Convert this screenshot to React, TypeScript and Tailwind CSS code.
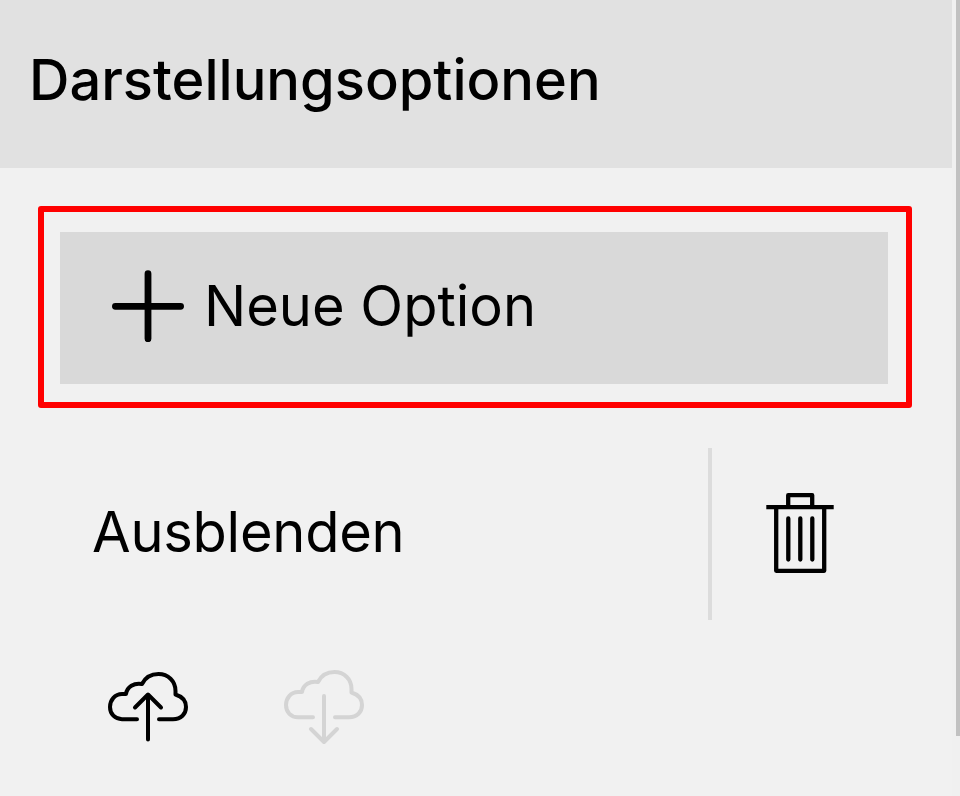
function PlusIcon() {
  return (
    <svg className="h-[72px] w-[72px] shrink-0" viewBox="0 0 72 72" fill="none" stroke="#000" strokeWidth="6.800" strokeLinecap="round" aria-hidden="true">
      <path d="M36 3.700V68.800M3.400 36.300H68.600" />
    </svg>
  );
}

function TrashIcon() {
  return (
    <svg className="h-[84px] w-[68px]" viewBox="0 0 68 84" fill="none" stroke="#000" strokeWidth="4.300" aria-hidden="true">
      <path d="M0.300 15.200H67.700" />
      <path d="M22.200 15V3.200H46.200V15M10.200 15V78.800H58.200V15" strokeLinejoin="round" />
      <path d="M22.300 26.500V67.500M34.300 26.500V67.500M46.300 26.500V67.500" strokeLinecap="round" />
    </svg>
  );
}

function UploadIcon() {
  return (
    <svg className="h-[80px] w-[80px]" viewBox="0 0 80 80" fill="none" stroke="#000" strokeWidth="4" strokeLinecap="round" strokeLinejoin="round" aria-hidden="true">
      <path d="M29 53.200H14C7 53.200 2 48 2 41C2 34 7 28 14 28H18C19 21 26 16.500 34 18C37 12 43 8 50.500 8C60 8 67.500 15 67.500 25V28.500C74 30.500 78 35 78 41C78 48 73 53.200 65 53.200H51" />
      <path d="M40 73.500V29M27 41.500L40 28.500L53 41.500" />
    </svg>
  );
}

function DownloadIcon() {
  return (
    <svg className="h-[80px] w-[80px]" viewBox="0 0 80 80" fill="none" stroke="#d4d4d4" strokeWidth="4" strokeLinecap="round" strokeLinejoin="round" aria-hidden="true">
      <path d="M29 51.300H14C7 51.300 2 46 2 39C2 32 7 26 14 26H18C19 19 26 14.500 34 16C37 10 43 6 50.500 6C60 6 67.500 13 67.500 23V26.500C74 28.500 78 33 78 39C78 46 73 51.300 65 51.300H51" />
      <path d="M40 30V75M27 63L40 76L53 63" />
    </svg>
  );
}

export default function App() {
  return (
    <div className="flex h-[796px] w-[960px] overflow-hidden bg-[#f0f0f0] font-['Inter','Liberation_Sans',sans-serif] text-[56px] leading-[68px] text-black">
      <main className="w-[952px] bg-[#f1f1f1]">
        <header className="h-[168px] bg-[#e1e1e1] pt-[46px] pl-[29px]">
          <h1 className="font-medium">Darstellungsoptionen</h1>
        </header>
        <section className="mt-[38px] ml-[38px] h-[202px] w-[874px] rounded-[3px] border-[6px] border-[#ff0000] pt-5 pl-4">
          <button type="button" className="flex h-[152px] w-[828px] items-center bg-[#d9d9d9] pb-1 pl-[52px] text-left">
            <PlusIcon />
            <span className="ml-5">Neue Option</span>
          </button>
        </section>
        <div className="mt-10 flex h-[172px]">
          <div className="flex w-[712px] items-center border-r-4 border-[#dcdcdc] pb-1 pl-[92px] tracking-[-0.25px]">Ausblenden</div>
          <button type="button" aria-label="Löschen" className="ml-[54px] flex items-center">
            <TrashIcon />
          </button>
        </div>
        <div className="mt-[46px] ml-[108px] flex gap-24">
          <button type="button" aria-label="Hochladen"><UploadIcon /></button>
          <button type="button" aria-label="Herunterladen" disabled><DownloadIcon /></button>
        </div>
      </main>
      <div className="ml-1 h-[736px] w-1 bg-[#c1c1c1]" />
    </div>
  );
}
